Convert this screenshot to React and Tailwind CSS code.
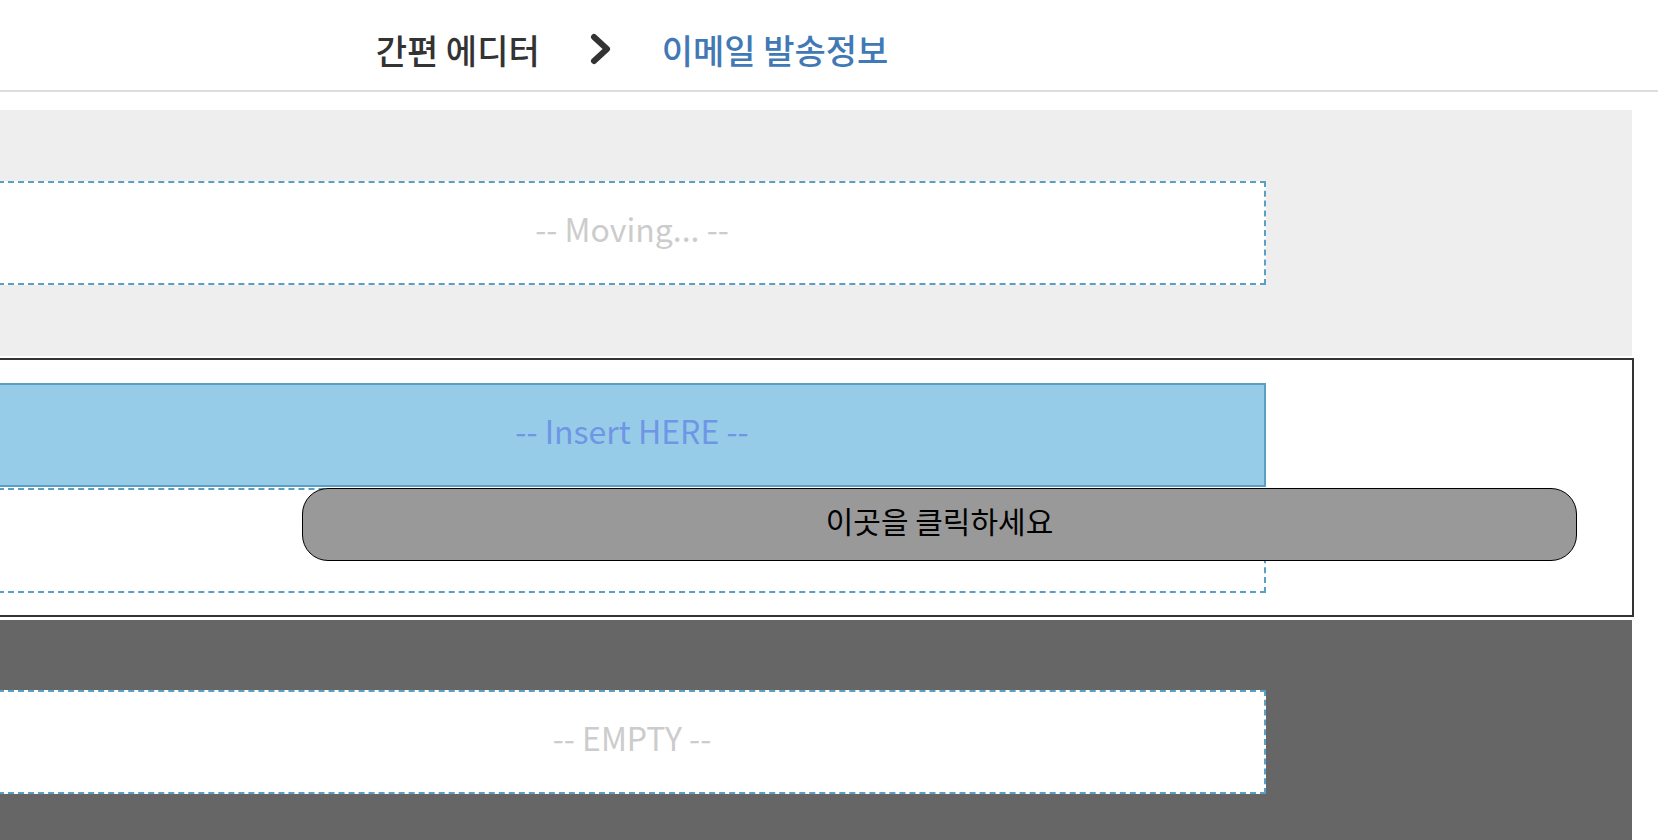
import React from 'react';

const font = { fontFamily: '"Noto Sans CJK KR", "Noto Sans", sans-serif' };

const Chevron = () => (
    <svg width="22" height="32" viewBox="0 0 22 32" className="shrink-0">
        <path d="M4 4 L17 16 L4 28" fill="none" stroke="#333" strokeWidth="6" strokeLinecap="round" strokeLinejoin="round" />
    </svg>
);

const DropBox = ({ label, className, textClass }) => (
    <div className={`w-[1268px] h-[104px] flex items-center justify-center pb-[10px] ${className}`}>
        <span className={`text-[32px] leading-none ${textClass}`}>{label}</span>
    </div>
);

const App = () => {
    return (
        <div className="w-[1658px] h-[840px] overflow-hidden bg-white" style={font}>
            <header className="h-[92px] border-b-2 border-[#dddddd] flex">
                <div className="w-[1264px] flex items-center justify-center gap-[50px] pt-[8px]">
                    <span className="text-[34px] font-medium text-[#333]">간편 에디터</span>
                    <Chevron />
                    <span className="text-[34px] font-medium text-[#4079b5]">이메일 발송정보</span>
                </div>
            </header>

            <div className="-ml-[4px] mt-[18px] flex flex-col">
                <section className="w-[1636px] h-[246px] bg-[#eeeeee] pt-[71px] pl-[2px]">
                    <DropBox label="-- Moving... --" className="bg-white border-2 border-dashed border-[#5a9fc4]" textClass="text-[#cccccc]" />
                </section>

                <section className="relative mt-[2px] w-[1638px] h-[259px] border-2 border-[#333] bg-white pt-[23px]">
                    <DropBox label="-- Insert HERE --" className="bg-[#96cce8] border-2 border-[#5a9fc4]" textClass="text-[#6f96e6]" />
                    <div className="mt-[1px] w-[1268px] h-[105px] border-2 border-dashed border-[#5a9fc4]" />
                    <button className="absolute left-[304px] top-[128px] w-[1275px] h-[73px] bg-[#999999] border-[1.5px] border-black rounded-[26px] flex items-center justify-center pb-[8px] text-[30px] text-black">
                        이곳을 클릭하세요
                    </button>
                </section>

                <section className="mt-[3px] w-[1636px] h-[260px] bg-[#666666] pt-[70px] pl-[2px]">
                    <DropBox label="-- EMPTY --" className="bg-white border-2 border-dashed border-[#5a9fc4]" textClass="text-[#cccccc]" />
                </section>
            </div>
        </div>
    );
};

export default App;
